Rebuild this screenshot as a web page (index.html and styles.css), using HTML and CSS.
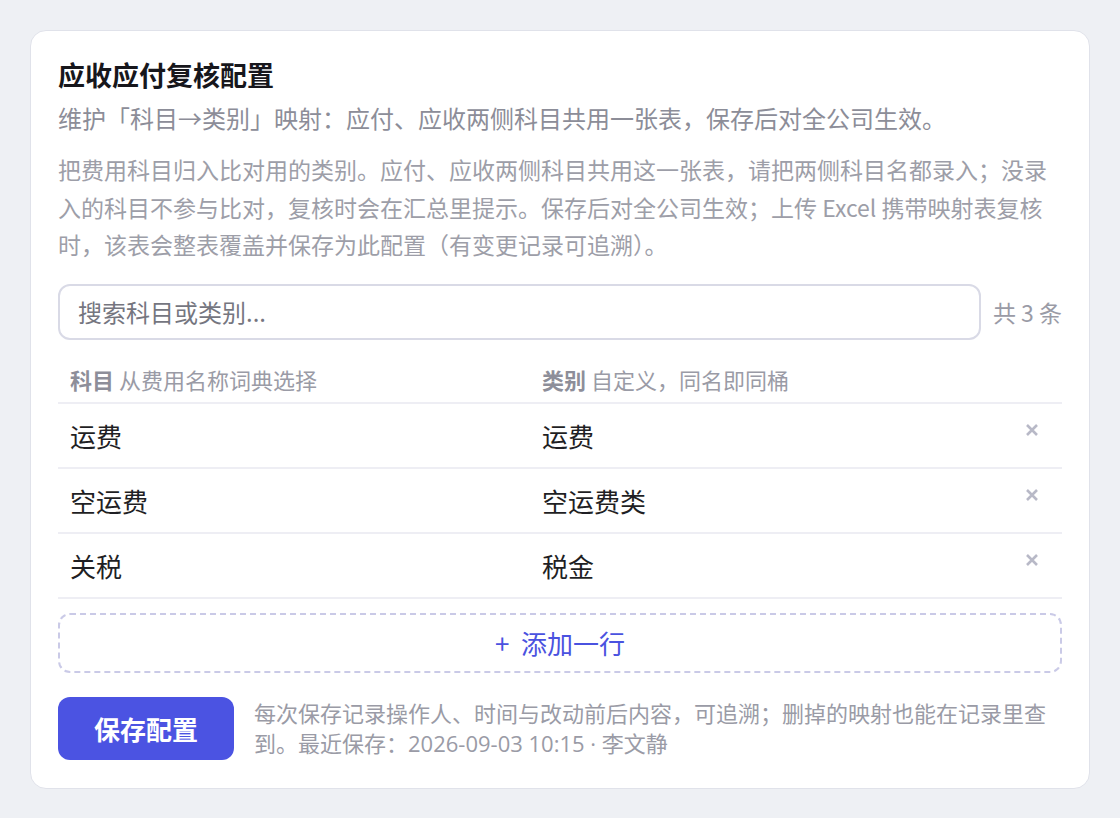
FILE: index.html
```html
<!DOCTYPE html>
<html lang="zh-CN">
<head>
    <meta charset="UTF-8">
    <title>应收应付复核配置</title>
    <link rel="stylesheet" href="styles.css">
</head>
<body>
<div class="card">
    <h1 class="title">应收应付复核配置</h1>
    <p class="sub">维护「科目→类别」映射：应付、应收两侧科目共用一张表，保存后对全公司生效。</p>
    <p class="desc">把费用科目归入比对用的类别。应付、应收两侧科目共用这一张表，请把两侧科目名都录入；没录入的科目不参与比对，复核时会在汇总里提示。保存后对全公司生效；上传 Excel 携带映射表复核时，该表会整表覆盖并保存为此配置（有变更记录可追溯）。</p>
    <div class="toolbar">
        <input class="search" type="text" placeholder="搜索科目或类别...">
        <span class="count">共 3 条</span>
    </div>
    <div class="table">
        <div class="row head">
            <div class="cell"><b>科目</b> 从费用名称词典选择</div>
            <div class="cell"><b>类别</b> 自定义，同名即同桶</div>
            <div class="cell"></div>
        </div>
        <div class="row">
            <div class="cell">运费</div>
            <div class="cell">运费</div>
            <div class="cell del"><svg width="14" height="14" viewBox="0 0 14 14"><path d="M2 2L12 12M12 2L2 12"/></svg></div>
        </div>
        <div class="row">
            <div class="cell">空运费</div>
            <div class="cell">空运费类</div>
            <div class="cell del"><svg width="14" height="14" viewBox="0 0 14 14"><path d="M2 2L12 12M12 2L2 12"/></svg></div>
        </div>
        <div class="row">
            <div class="cell">关税</div>
            <div class="cell">税金</div>
            <div class="cell del"><svg width="14" height="14" viewBox="0 0 14 14"><path d="M2 2L12 12M12 2L2 12"/></svg></div>
        </div>
    </div>
    <button class="add">+&nbsp; 添加一行</button>
    <div class="footer">
        <button class="save">保存配置</button>
        <p class="note">每次保存记录操作人、时间与改动前后内容，可追溯；删掉的映射也能在记录里查到。最近保存：2026-09-03 10:15 · 李文静</p>
    </div>
</div>
</body>
</html>
```

FILE: styles.css
```css
*{
    margin: 0;
    padding: 0;
    box-sizing: border-box;
}
body{
    background: #eef0f4;
    padding: 30px;
    font-family: "Noto Sans CJK SC", "Noto Sans", sans-serif;
    color: #1f1f24;
}
.card{
    width: 1060px;
    background: #fff;
    border: 1px solid #e0e2ea;
    border-radius: 16px;
    padding: 26px 27px 28px;
}
.title{
    font-size: 27px;
    font-weight: 700;
    line-height: 36px;
    color: #17171c;
    margin-bottom: 8px;
}
.sub{
    font-size: 24px;
    line-height: 34px;
    color: #8c8d98;
}
.desc{
    margin-top: 16px;
    font-size: 23px;
    line-height: 37.5px;
    color: #9d9ea8;
}
.toolbar{
    display: flex;
    align-items: center;
    gap: 12px;
    margin-top: 20px;
}
.search{
    flex: 1;
    height: 56px;
    border: 2px solid #d9dae6;
    border-radius: 12px;
    padding: 0 18px;
    font-family: inherit;
    font-size: 24px;
    color: #1f1f24;
    outline: none;
}
.search::placeholder{
    color: #75767f;
}
.count{
    font-size: 23px;
    color: #9a9ba6;
}
.table{
    margin-top: 10px;
}
.row{
    display: grid;
    grid-template-columns: 1fr 1fr 60px;
    border-bottom: 2px solid #eeeef4;
    align-items: center;
}
.cell{
    padding: 12px;
    font-size: 26px;
    line-height: 39px;
}
.head .cell{
    padding: 14px 12px 8px;
    font-size: 22px;
    line-height: 30px;
    color: #9a9ba6;
}
.head b{
    color: #8d8e99;
    font-weight: 700;
}
.del{
    display: flex;
    justify-content: center;
    padding: 0 0 10px;
    cursor: pointer;
}
.del svg{
    stroke: #b8b9c7;
    stroke-width: 2.6;
    fill: none;
}
.add{
    display: block;
    width: 100%;
    height: 60px;
    margin-top: 14px;
    background: #fff;
    border: 2px dashed #cacae7;
    border-radius: 12px;
    font-family: inherit;
    font-size: 26px;
    color: #4a52e0;
    cursor: pointer;
}
.footer{
    display: flex;
    align-items: center;
    gap: 20px;
    margin-top: 24px;
}
.save{
    flex: none;
    width: 176px;
    height: 63px;
    background: #4b53e2;
    border: none;
    border-radius: 12px;
    font-family: inherit;
    font-size: 26px;
    font-weight: 700;
    color: #fff;
    cursor: pointer;
}
.note{
    font-family: "Open Sans", "Noto Sans CJK SC", sans-serif;
    font-size: 22px;
    line-height: 30px;
    color: #9a9ba6;
}
```
